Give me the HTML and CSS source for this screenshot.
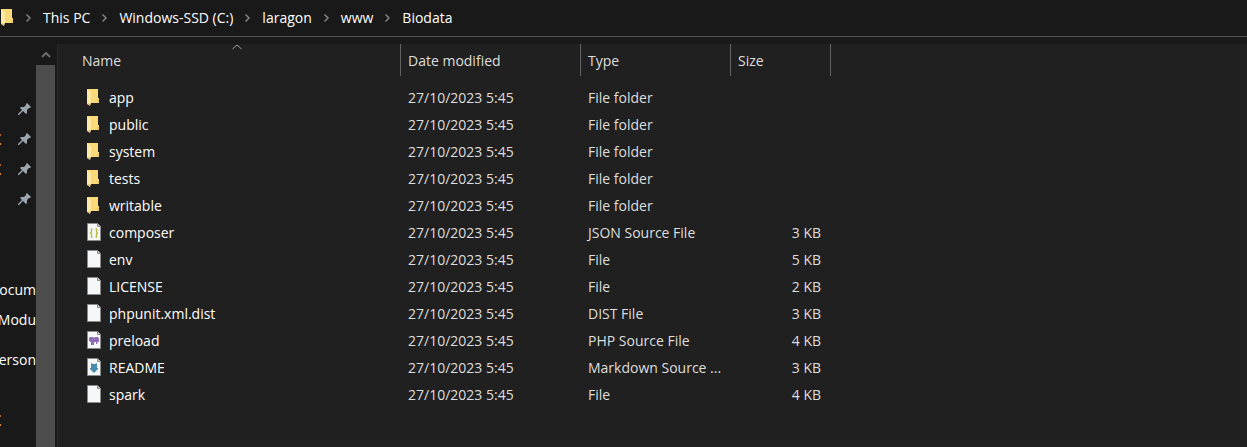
FILE: index.html
```html
<!DOCTYPE html>
<html lang="en">
<head>
    <meta charset="UTF-8">
    <meta name="viewport" content="width=device-width, initial-scale=1.0">
    <title>Biodata</title>
    <link rel="stylesheet" href="styles.css">
</head>

<body>
    <!-- Icons used more than once -->
    <svg class="sprite" aria-hidden="true">
        <symbol id="folder" viewBox="0 0 16 20">
            <path d="M1 1h11v9h1v5H4z" fill="#f9d978"/>
            <path d="M11 12h2v3h-2z" fill="#efca68"/>
            <path d="M1 1l4 3v11l-1 3-3-2z" fill="#ffe9a6"/>
            <path d="M1 15l3 1v2z" fill="#d9b357"/>
        </symbol>
        <symbol id="file" viewBox="0 0 16 20">
            <path d="M1.5 .5h10l3 3v14h-13z" fill="#f5f7f8" stroke="#8b8b8b"/>
            <path d="M11.5 .5v3h3" fill="#d5d5d5" stroke="#8b8b8b"/>
        </symbol>
        <symbol id="chevron" viewBox="0 0 9 10">
            <path d="M2.500 1.500l3.500 3.500-3.500 3.500" fill="none" stroke="#808080" stroke-width="1.500"/>
        </symbol>
        <symbol id="pin" viewBox="0 0 14 14">
            <path d="M9 1l4 4-1 1h-1L9 8v3l-1 1-3-3-4 4H0v-1l4-4-2-2 1-1h3l2-2V2z" fill="#9aa5ad"/>
        </symbol>
    </svg>

    <header class="address-bar">
        <svg class="icon"><use href="#folder"/></svg>
        <nav class="path">
            <svg class="chevron"><use href="#chevron"/></svg>
            <a href="#">This PC</a>
            <svg class="chevron"><use href="#chevron"/></svg>
            <a href="#">Windows-SSD (C:)</a>
            <svg class="chevron"><use href="#chevron"/></svg>
            <a href="#">laragon</a>
            <svg class="chevron"><use href="#chevron"/></svg>
            <a href="#">www</a>
            <svg class="chevron"><use href="#chevron"/></svg>
            <a href="#">Biodata</a>
        </nav>
    </header>

    <div class="explorer">
        <aside class="sidebar">
            <ul class="group">
                <li><svg class="pin"><use href="#pin"/></svg></li>
                <li class="marked"><svg class="pin"><use href="#pin"/></svg></li>
                <li class="marked"><svg class="pin"><use href="#pin"/></svg></li>
                <li><svg class="pin"><use href="#pin"/></svg></li>
            </ul>
            <ul class="group recent">
                <li><a href="#">Docum</a></li>
                <li><a href="#">Modu</a></li>
            </ul>
            <ul class="group">
                <li><a href="#">Person</a></li>
            </ul>
            <ul class="group drives">
                <li class="marked"></li>
            </ul>
        </aside>

        <div class="scrollbar">
            <button class="scroll-up" aria-label="Scroll up">
                <svg width="10" height="6" viewBox="0 0 10 6"><path d="M1 5l4-4 4 4" fill="none" stroke="#6b6b6b" stroke-width="2"/></svg>
            </button>
            <div class="thumb"></div>
        </div>

        <main class="files">
            <table>
                <colgroup>
                    <col class="col-name">
                    <col class="col-date">
                    <col class="col-type">
                    <col class="col-size">
                </colgroup>
                <thead>
                    <tr>
                        <th>
                            <button>Name
                                <svg class="sort" viewBox="0 0 10 6"><path d="M.5 5l4.500-4 4.500 4" fill="none" stroke="#a0a0a0"/></svg>
                            </button>
                        </th>
                        <th><button>Date modified</button></th>
                        <th><button>Type</button></th>
                        <th><button>Size</button></th>
                    </tr>
                </thead>
                <tbody>
                    <tr>
                        <td><div class="name"><svg class="icon"><use href="#folder"/></svg>app</div></td>
                        <td>27/10/2023 5:45</td>
                        <td>File folder</td>
                        <td></td>
                    </tr>
                    <tr>
                        <td><div class="name"><svg class="icon"><use href="#folder"/></svg>public</div></td>
                        <td>27/10/2023 5:45</td>
                        <td>File folder</td>
                        <td></td>
                    </tr>
                    <tr>
                        <td><div class="name"><svg class="icon"><use href="#folder"/></svg>system</div></td>
                        <td>27/10/2023 5:45</td>
                        <td>File folder</td>
                        <td></td>
                    </tr>
                    <tr>
                        <td><div class="name"><svg class="icon"><use href="#folder"/></svg>tests</div></td>
                        <td>27/10/2023 5:45</td>
                        <td>File folder</td>
                        <td></td>
                    </tr>
                    <tr>
                        <td><div class="name"><svg class="icon"><use href="#folder"/></svg>writable</div></td>
                        <td>27/10/2023 5:45</td>
                        <td>File folder</td>
                        <td></td>
                    </tr>
                    <tr>
                        <td><div class="name">
                            <svg class="icon">
                                <use href="#file"/>
                                <path d="M6.500 6H5.500v3l-1 1 1 1v3h1M9.500 6h1v3l1 1-1 1v3h-1" fill="none" stroke="#b9b93c" stroke-width="1.300"/>
                            </svg>composer</div></td>
                        <td>27/10/2023 5:45</td>
                        <td>JSON Source File</td>
                        <td>3 KB</td>
                    </tr>
                    <tr>
                        <td><div class="name"><svg class="icon"><use href="#file"/></svg>env</div></td>
                        <td>27/10/2023 5:45</td>
                        <td>File</td>
                        <td>5 KB</td>
                    </tr>
                    <tr>
                        <td><div class="name"><svg class="icon"><use href="#file"/></svg>LICENSE</div></td>
                        <td>27/10/2023 5:45</td>
                        <td>File</td>
                        <td>2 KB</td>
                    </tr>
                    <tr>
                        <td><div class="name"><svg class="icon"><use href="#file"/></svg>phpunit.xml.dist</div></td>
                        <td>27/10/2023 5:45</td>
                        <td>DIST File</td>
                        <td>3 KB</td>
                    </tr>
                    <tr>
                        <td><div class="name">
                            <svg class="icon">
                                <use href="#file"/>
                                <path d="M3 7l1-1h3l1 1 1-1h3l1 2v3h-1v-1l-1 3h-1v-2H8v3H5v-3H4v-1H3z" fill="#8f6bb5"/>
                            </svg>preload</div></td>
                        <td>27/10/2023 5:45</td>
                        <td>PHP Source File</td>
                        <td>4 KB</td>
                    </tr>
                    <tr>
                        <td><div class="name">
                            <svg class="icon">
                                <use href="#file"/>
                                <path d="M5 5l2 1h2l2-1v5h1v1l-4 4-4-4v-1h1z" fill="#4a8bab"/>
                            </svg>README</div></td>
                        <td>27/10/2023 5:45</td>
                        <td>Markdown Source ...</td>
                        <td>3 KB</td>
                    </tr>
                    <tr>
                        <td><div class="name"><svg class="icon"><use href="#file"/></svg>spark</div></td>
                        <td>27/10/2023 5:45</td>
                        <td>File</td>
                        <td>4 KB</td>
                    </tr>
                </tbody>
            </table>
        </main>
    </div>
</body>

</html>
```
FILE: styles.css
```css
* {
    box-sizing: border-box;
}

body {
    margin: 0;
    min-height: 100vh;
    display: flex;
    flex-direction: column;
    background-color: #191919;
    color: #dedede;
    font-family: "Open Sans", "Noto Sans", sans-serif;
    font-size: 14px;
    line-height: 20px;
}

a {
    color: white;
    text-decoration: none;
}

ul {
    list-style: none;
    margin: 0;
    padding: 0;
}

button {
    border: 0;
    background: none;
    color: inherit;
    font: inherit;
}

.sprite {
    position: absolute;
    width: 0;
    height: 0;
}

.icon {
    width: 16px;
    height: 20px;
    flex: none;
}

/* Address bar */
.address-bar {
    display: flex;
    align-items: center;
    height: 37px;
    margin-bottom: 7px;
    border-bottom: 1px solid #535353;
}

.path {
    display: flex;
    align-items: center;
    gap: 10px;
    padding-left: 8px;
    white-space: nowrap;
}

.chevron {
    width: 9px;
    height: 10px;
}

/* Left side */
.explorer {
    display: flex;
    flex: 1;
}

.sidebar {
    width: 36px;
    padding-top: 50px;
    overflow: hidden;
}

.group {
    margin-bottom: 10px;
}

.group li {
    display: flex;
    align-items: center;
    justify-content: flex-end;
    height: 30px;
}

.recent {
    margin-top: 61px;
}

.drives {
    margin-top: 30px;
}

.marked::before {
    content: "";
    width: 1px;
    height: 7px;
    margin-right: auto;
    border-top: 2px solid #b5651d;
    border-bottom: 2px solid #e08a2c;
}

.pin {
    width: 14px;
    height: 14px;
    margin-right: 4px;
}

.scrollbar {
    display: flex;
    flex-direction: column;
    width: 19px;
}

.scroll-up {
    display: flex;
    align-items: center;
    justify-content: center;
    height: 21px;
    padding: 0;
}

.thumb {
    flex: 1;
    background-color: #4d4d4d;
}

/* File list */
.files {
    flex: 1;
    margin-left: 2px;
    padding-left: 16px;
    border-left: 1px solid #2b2b2b;
    background-color: #202020;
}

table {
    width: 757px;
    table-layout: fixed;
    border-collapse: collapse;
}

.col-name {
    width: 327px;
}

.col-date {
    width: 180px;
}

.col-type {
    width: 150px;
}

.col-size {
    width: 100px;
}

th {
    padding: 0 0 8px;
    font-weight: normal;
}

th button {
    position: relative;
    display: block;
    width: 100%;
    height: 32px;
    padding: 2px 7px 0;
    border-right: 1px solid #636363;
    text-align: left;
}

th:first-child button {
    padding-left: 8px;
}

.sort {
    position: absolute;
    top: 0;
    left: 50%;
    width: 10px;
    height: 6px;
    margin-left: -5px;
}

td {
    height: 27px;
    padding: 0 7px;
    white-space: nowrap;
}

td:last-child {
    padding-right: 10px;
    text-align: right;
}

.name {
    display: flex;
    align-items: center;
    gap: 7px;
    padding-left: 5px;
    color: white;
}
```
